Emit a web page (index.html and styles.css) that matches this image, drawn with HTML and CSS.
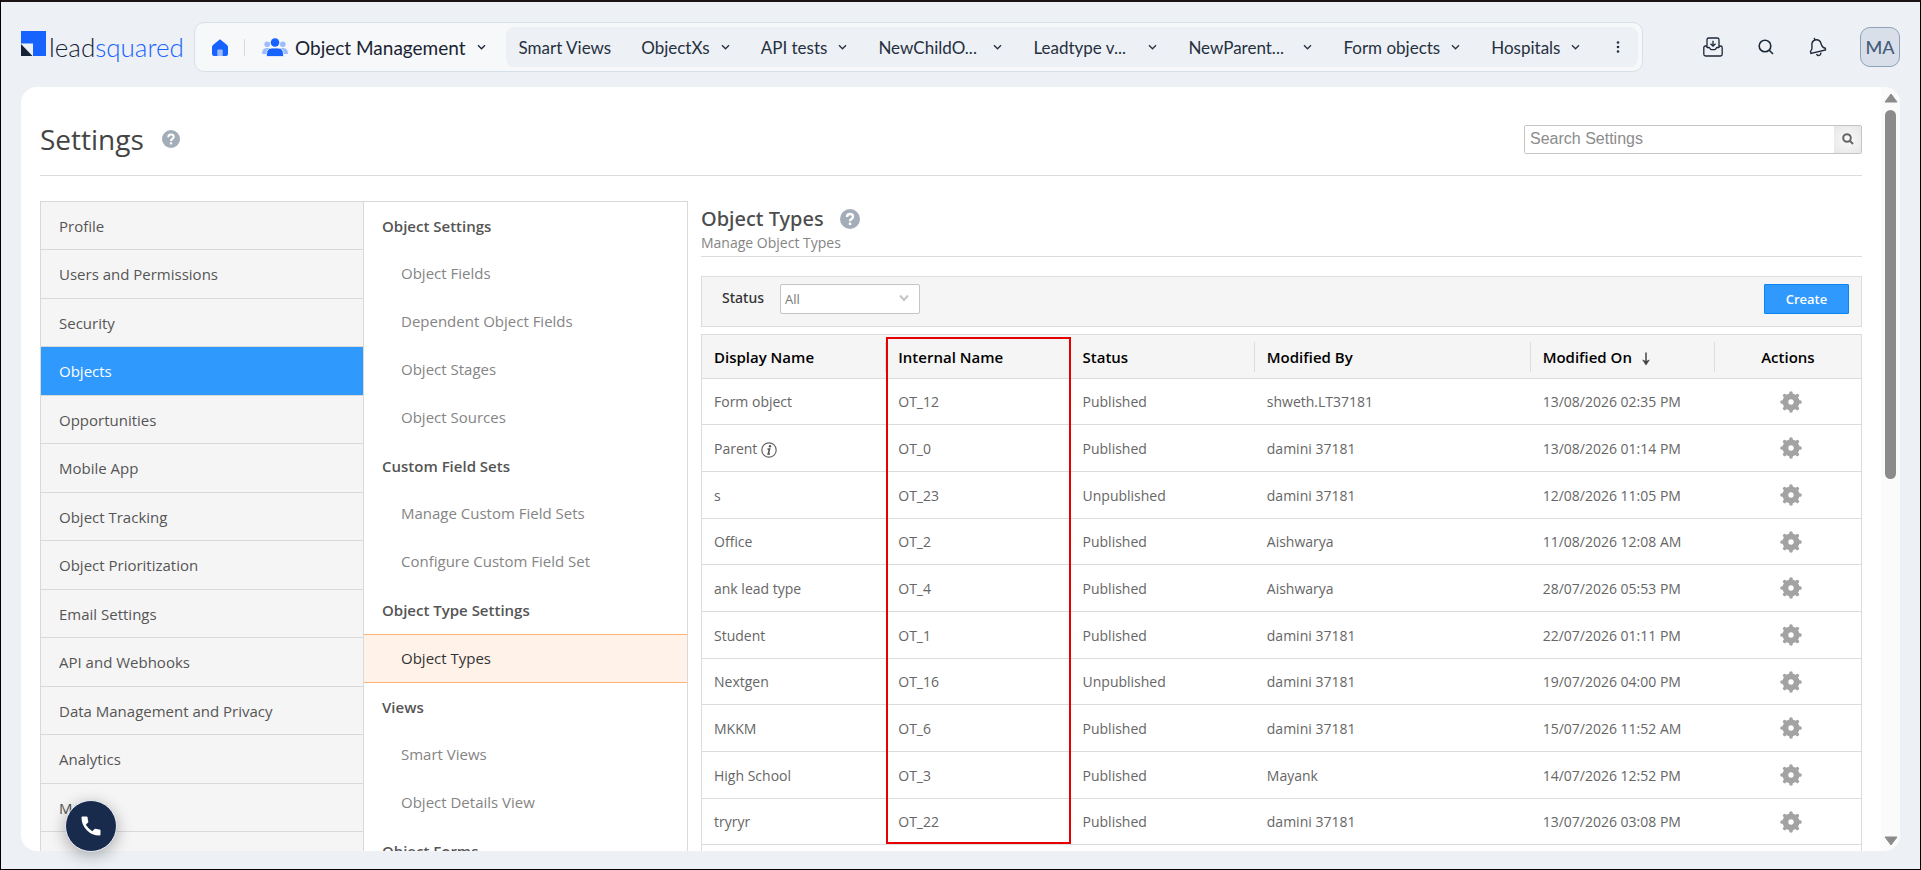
FILE: index.html
```html
<!DOCTYPE html>
<html lang="en">
<head>
    <meta charset="UTF-8">
    <meta name="viewport" content="width=device-width, initial-scale=1.0">
    <title>Settings - Object Types</title>
    <link rel="stylesheet" href="styles.css">
</head>
<body>
    <svg class="sprite" aria-hidden="true">
        <symbol id="chevron" viewBox="0 0 8 8">
            <path d="M0.5 2.2 L4 5.8 L7.5 2.2" fill="none" stroke="currentColor" stroke-width="1.3"/>
        </symbol>
        <symbol id="help" viewBox="0 0 20 20">
            <circle cx="10" cy="10" r="10" fill="#a3adb9"/>
            <path d="M7 8 Q7 5 10 5 Q13 5 13 7.6 Q13 9.2 11.4 10 Q10 10.8 10 12.2" fill="none" stroke="#fff" stroke-width="2.3"/>
            <rect x="8.8" y="13.6" width="2.4" height="2.4" fill="#fff"/>
        </symbol>
        <symbol id="gear" viewBox="0 0 22 22">
            <g fill="#a3a3a3">
                <circle cx="11" cy="11" r="8.5"/>
                <g id="teeth">
                    <rect x="9.2" y="0.3" width="3.6" height="21.4" rx="1.6"/>
                    <rect x="0.3" y="9.2" width="21.4" height="3.6" rx="1.6"/>
                </g>
                <use href="#teeth" transform="rotate(45 11 11)"/>
            </g>
            <circle cx="11" cy="11" r="2.7" fill="#fff"/>
        </symbol>
    </svg>

    <header class="header">
        <a class="logo" href="#" aria-label="leadsquared">
            <svg width="25" height="25" viewBox="0 0 25 25">
                <path d="M0 0 H25 V25 H12 V12.5 H0 Z" fill="#1663ff"/>
                <path d="M0 13 V25 H11.5 Z" fill="#152238"/>
            </svg>
            <span class="logo-text">lead<span>squared</span></span>
        </a>

        <nav class="nav">
            <a class="home" href="#" aria-label="Home">
                <svg width="16" height="17" viewBox="0 0 16 17">
                    <path d="M8 0.3 L15 6 Q16 6.8 16 8 V15 Q16 17 14 17 H2 Q0 17 0 15 V8 Q0 6.8 1 6 Z" fill="#1663ff"/>
                    <path d="M5.3 17 V11.5 Q5.3 10.5 6.3 10.5 H9.7 Q10.7 10.5 10.7 11.5 V17 Z" fill="#9dbcff"/>
                </svg>
            </a>
            <button class="module">
                <svg width="26" height="19" viewBox="0 0 26 19">
                    <g fill="#9dbcff">
                        <circle cx="5.2" cy="6.2" r="2.8"/>
                        <circle cx="20.8" cy="6.2" r="2.8"/>
                        <path d="M0 16 Q0 10 4.5 10 H8 L5 16 Z"/>
                        <path d="M26 16 Q26 10 21.5 10 H18 L21 16 Z"/>
                    </g>
                    <path d="M4.500 18.500 V16.500 Q4.500 10 10 10 H16 Q21.500 10 21.500 16.500 V18.500 Z" fill="#1663ff" stroke="#f6f8fa" stroke-width="0.8"/>
                    <circle cx="13" cy="4.500" r="4.300" fill="#1663ff"/>
                </svg>
                <span>Object Management</span>
                <svg class="chevron"><use href="#chevron"/></svg>
            </button>
            <div class="tabs">
                <button class="tab">Smart Views</button>
                <button class="tab">ObjectXs <svg class="chevron"><use href="#chevron"/></svg></button>
                <button class="tab">API tests <svg class="chevron"><use href="#chevron"/></svg></button>
                <button class="tab"><span class="clip">NewChildO...</span> <svg class="chevron"><use href="#chevron"/></svg></button>
                <button class="tab"><span class="clip">Leadtype v...</span> <svg class="chevron"><use href="#chevron"/></svg></button>
                <button class="tab"><span class="clip">NewParent...</span> <svg class="chevron"><use href="#chevron"/></svg></button>
                <button class="tab">Form objects <svg class="chevron"><use href="#chevron"/></svg></button>
                <button class="tab">Hospitals <svg class="chevron"><use href="#chevron"/></svg></button>
                <button class="more" aria-label="More">
                    <svg width="4" height="12" viewBox="0 0 4 12" fill="#26303f">
                        <circle cx="2" cy="1.5" r="1.3"/><circle cx="2" cy="6" r="1.3"/><circle cx="2" cy="10.5" r="1.3"/>
                    </svg>
                </button>
            </div>
        </nav>

        <div class="tools">
            <button class="tool" aria-label="Inbox">
                <svg width="20" height="20" viewBox="0 0 20 20" fill="none" stroke="#1d2939" stroke-width="1.3">
                    <path d="M4 11 V2.700 Q4 1 5.700 1 H14.300 Q16 1 16 2.700 V11"/>
                    <path d="M4 9 H2.500 Q0.800 9 0.800 10.700 V17.300 Q0.800 19 2.500 19 H17.500 Q19.200 19 19.200 17.300 V10.700 Q19.200 9 17.500 9 H16"/>
                    <path d="M4 10.500 H5.500 Q6.500 10.500 7 11.500 Q7.500 12.700 8.500 12.700 H11.500 Q12.500 12.700 13 11.500 Q13.500 10.500 14.500 10.500 H16"/>
                    <path d="M10 3.800 V9 M7.500 6.800 L10 9.200 L12.500 6.800"/>
                </svg>
            </button>
            <button class="tool" aria-label="Search">
                <svg width="16" height="16" viewBox="0 0 16 16" fill="none" stroke="#1d2939" stroke-width="1.6">
                    <circle cx="7" cy="7" r="5.800"/><path d="M11 11 L15 15"/>
                </svg>
            </button>
            <button class="tool" aria-label="Notifications">
                <svg width="18" height="20" viewBox="0 0 18 20" fill="none" stroke="#1d2939" stroke-width="1.4">
                    <path d="M2 16.500 L1.500 14.500 Q3.500 12.500 3 9 Q2.200 4.500 6 3 Q10.500 2 12 6.500 Q13.200 10.800 16.300 11.200 L16.500 13 Z M5.800 3 L5.300 0.800 M7.500 17 Q8.700 19.500 11 18 Q12 17.200 11.800 15.500"/>
                </svg>
            </button>
            <button class="avatar">MA</button>
        </div>
    </header>

    <main class="card">
        <div class="content">
            <div class="page-head">
                <h1>Settings</h1>
                <svg class="help small"><use href="#help"/></svg>
                <form class="search">
                    <input type="text" placeholder="Search Settings" aria-label="Search Settings">
                    <button type="button" aria-label="Search">
                        <svg width="12" height="12" viewBox="0 0 12 12" fill="none" stroke="#666" stroke-width="2">
                            <circle cx="5" cy="5" r="3.8"/><path d="M7.5 7.5 L11 11"/>
                        </svg>
                    </button>
                </form>
            </div>

            <div class="columns">
                <nav class="menu">
                    <a href="#">Profile</a>
                    <a href="#">Users and Permissions</a>
                    <a href="#">Security</a>
                    <a href="#" class="active">Objects</a>
                    <a href="#">Opportunities</a>
                    <a href="#">Mobile App</a>
                    <a href="#">Object Tracking</a>
                    <a href="#">Object Prioritization</a>
                    <a href="#">Email Settings</a>
                    <a href="#">API and Webhooks</a>
                    <a href="#">Data Management and Privacy</a>
                    <a href="#">Analytics</a>
                    <a href="#">More</a>
                    <a href="#"></a>
                </nav>

                <nav class="submenu">
                    <h3>Object Settings</h3>
                    <a href="#">Object Fields</a>
                    <a href="#">Dependent Object Fields</a>
                    <a href="#">Object Stages</a>
                    <a href="#">Object Sources</a>
                    <h3>Custom Field Sets</h3>
                    <a href="#">Manage Custom Field Sets</a>
                    <a href="#">Configure Custom Field Set</a>
                    <h3>Object Type Settings</h3>
                    <a href="#" class="active">Object Types</a>
                    <h3>Views</h3>
                    <a href="#">Smart Views</a>
                    <a href="#">Object Details View</a>
                    <h3>Object Forms</h3>
                </nav>

                <section class="panel">
                    <div class="panel-head">
                        <h2>Object Types <svg class="help"><use href="#help"/></svg></h2>
                        <p>Manage Object Types</p>
                    </div>

                    <div class="filter">
                        <label for="status">Status</label>
                        <div class="select">
                            <select id="status"><option>All</option></select>
                            <svg width="10" height="8" viewBox="0 0 10 8"><path d="M1 1.5 L5 6 L9 1.5" fill="none" stroke="#c4c4c4" stroke-width="2"/></svg>
                        </div>
                        <button class="create">Create</button>
                    </div>

                    <div class="table-wrap">
                        <table>
                            <thead>
                                <tr>
                                    <th><div>Display Name</div></th>
                                    <th><div>Internal Name</div></th>
                                    <th><div>Status</div></th>
                                    <th class="wide"><div>Modified By</div></th>
                                    <th><div>Modified On
                                        <svg width="8" height="14" viewBox="0 0 8 14"><path d="M4 0.5 V9" stroke="#444" stroke-width="1.5"/><path d="M0 7.5 L4 9 L8 7.5 L4 13.5 Z" fill="#444"/></svg>
                                    </div></th>
                                    <th class="actions"><div>Actions</div></th>
                                </tr>
                            </thead>
                            <tbody>
                                <tr><td>Form object</td><td>OT_12</td><td>Published</td><td>shweth.LT37181</td><td>13/08/2026 02:35 PM</td><td><svg class="gear"><use href="#gear"/></svg></td></tr>
                                <tr><td>Parent <svg class="info" viewBox="0 0 16 16"><circle cx="8" cy="8" r="7.2" fill="none" stroke="#666" stroke-width="1.2"/><circle cx="9" cy="4.2" r="1.2" fill="#555"/><path d="M6.5 7 H8.6 L7.2 12 H9" fill="none" stroke="#555" stroke-width="1.6"/></svg></td><td>OT_0</td><td>Published</td><td>damini 37181</td><td>13/08/2026 01:14 PM</td><td><svg class="gear"><use href="#gear"/></svg></td></tr>
                                <tr><td>s</td><td>OT_23</td><td>Unpublished</td><td>damini 37181</td><td>12/08/2026 11:05 PM</td><td><svg class="gear"><use href="#gear"/></svg></td></tr>
                                <tr><td>Office</td><td>OT_2</td><td>Published</td><td>Aishwarya</td><td>11/08/2026 12:08 AM</td><td><svg class="gear"><use href="#gear"/></svg></td></tr>
                                <tr><td>ank lead type</td><td>OT_4</td><td>Published</td><td>Aishwarya</td><td>28/07/2026 05:53 PM</td><td><svg class="gear"><use href="#gear"/></svg></td></tr>
                                <tr><td>Student</td><td>OT_1</td><td>Published</td><td>damini 37181</td><td>22/07/2026 01:11 PM</td><td><svg class="gear"><use href="#gear"/></svg></td></tr>
                                <tr><td>Nextgen</td><td>OT_16</td><td>Unpublished</td><td>damini 37181</td><td>19/07/2026 04:00 PM</td><td><svg class="gear"><use href="#gear"/></svg></td></tr>
                                <tr><td>MKKM</td><td>OT_6</td><td>Published</td><td>damini 37181</td><td>15/07/2026 11:52 AM</td><td><svg class="gear"><use href="#gear"/></svg></td></tr>
                                <tr><td>High School</td><td>OT_3</td><td>Published</td><td>Mayank</td><td>14/07/2026 12:52 PM</td><td><svg class="gear"><use href="#gear"/></svg></td></tr>
                                <tr><td>tryryr</td><td>OT_22</td><td>Published</td><td>damini 37181</td><td>13/07/2026 03:08 PM</td><td><svg class="gear"><use href="#gear"/></svg></td></tr>
                            </tbody>
                        </table>
                        <div class="highlight"></div>
                    </div>
                </section>
            </div>
        </div>

        <div class="scrollbar">
            <svg width="14" height="10" viewBox="0 0 14 10"><path d="M7 1 L13 9 H1 Z" fill="#8b8b8b" stroke="#8b8b8b" stroke-linejoin="round"/></svg>
            <div class="thumb"></div>
            <svg width="14" height="10" viewBox="0 0 14 10"><path d="M7 9 L13 1 H1 Z" fill="#8b8b8b" stroke="#8b8b8b" stroke-linejoin="round"/></svg>
        </div>
    </main>

    <button class="call" aria-label="Call">
        <svg width="22" height="22" viewBox="0 0 22 22"><path d="M2.5 1.5 H6.5 Q7.5 1.5 7.6 2.5 Q7.7 4.5 8.3 6.2 Q8.5 7 8 7.6 L5.8 9.8 Q8.2 14 12.3 16.2 L14.5 14 Q15 13.6 15.8 13.8 Q17.5 14.3 19.5 14.4 Q20.5 14.5 20.5 15.5 V19.5 Q20.5 20.5 19.5 20.5 Q12 20.5 6.8 15.2 Q1.5 10 1.5 2.5 Q1.5 1.5 2.5 1.5 Z" fill="#fff"/></svg>
    </button>
</body>
</html>
```
FILE: styles.css
```css
* {
    box-sizing: border-box;
}
body {
    margin: 0;
    height: 100vh;
    display: flex;
    flex-direction: column;
    overflow: hidden;
    background: #edf1f5;
    border: 1px solid #000;
    border-top: 2px solid #1a1414;
    font-family: "Open Sans", sans-serif;
    color: #555;
}
button {
    font: inherit;
    color: inherit;
    background: none;
    border: 0;
    padding: 0;
    cursor: pointer;
}
a {
    color: inherit;
    text-decoration: none;
}
h1, h2, h3, p {
    margin: 0;
}
svg {
    flex-shrink: 0;
}
.sprite {
    position: absolute;
    width: 0;
    height: 0;
}

/* header */
.header {
    display: flex;
    align-items: center;
    padding: 20px 20px 15px;
    font-family: Lato, sans-serif;
}
.logo {
    display: flex;
    gap: 3px;
    width: 173px;
    flex-shrink: 0;
}
.logo-text {
    font-size: 26px;
    line-height: 32px;
    font-weight: 300;
    color: #152238;
}
.logo-text span {
    color: #1663ff;
}
.nav {
    display: flex;
    align-items: center;
    height: 50px;
    padding: 0 4px 0 17px;
    background: #f6f8fa;
    border: 1px solid #d8e0e7;
    border-radius: 10px;
}
.home {
    display: flex;
    padding-right: 16px;
    border-right: 1px solid #d5dbe1;
}
.module {
    display: flex;
    align-items: center;
    gap: 7px;
    padding: 0 20px 0 17px;
    font-size: 19px;
    font-weight: 400;
    white-space: nowrap;
    color: #1a2433;
}
.chevron {
    width: 9px;
    height: 8px;
    margin-left: 4px;
}
.tabs {
    display: flex;
    align-items: center;
    height: 40px;
    padding: 0 18px 0 0;
    background: #edf1f5;
    border-radius: 8px;
    font-size: 17px;
    color: #26303f;
}
.tab {
    display: flex;
    align-items: center;
    gap: 7px;
    padding: 0 18px 0 13px;
    white-space: nowrap;
}
.tab:first-child {
    padding-right: 17px;
}
.clip {
    width: 104px;
    text-align: left;
}
.more {
    display: flex;
    padding-left: 18px;
}
.tools {
    display: flex;
    align-items: center;
    gap: 31px;
    margin-left: auto;
}
.tool {
    display: flex;
    padding: 0 2px;
}
.avatar {
    width: 40px;
    height: 40px;
    border: 1px solid #8ea0bb;
    border-radius: 10px;
    background: #d8dfe8;
    color: #475b7b;
    font-size: 18px;
    font-weight: 500;
}

/* page card */
.card {
    flex: 1;
    min-height: 0;
    display: flex;
    margin: 0 20px 18px;
    background: #fff;
    border-radius: 16px;
    overflow: hidden;
}
.content {
    flex: 1;
    padding: 28px 19px 0;
}
.page-head {
    display: flex;
    align-items: center;
    height: 61px;
    padding-bottom: 12px;
    border-bottom: 1px solid #dcdcdc;
}
.page-head h1 {
    font-size: 28px;
    line-height: 40px;
    font-weight: 400;
    color: #444;
}
.help {
    width: 20px;
    height: 20px;
    margin-left: 16px;
}
.help.small {
    width: 18px;
    height: 18px;
    margin-left: 18px;
}
.search {
    display: flex;
    width: 338px;
    height: 29px;
    margin-left: auto;
    border: 1px solid #c4c4c4;
    border-radius: 2px;
}
.search input {
    flex: 1;
    min-width: 0;
    border: 0;
    padding: 0 5px;
    font: 16px "Liberation Sans", sans-serif;
}
.search input::placeholder {
    color: #8c8c8c;
}
.search button {
    width: 27px;
    background: radial-gradient(#fafafa, #e6e6e6);
}

.columns {
    display: flex;
    padding-top: 25px;
}
.menu, .submenu {
    flex-shrink: 0;
    border-top: 1px solid #d9d9d9;
    border-left: 1px solid #d9d9d9;
    font-size: 15px;
}
.menu {
    width: 323px;
    background: #f5f5f5;
}
.menu a {
    display: flex;
    align-items: center;
    height: 48px;
    padding-left: 18px;
    border-bottom: 1px solid #d9d9d9;
}
.menu a:nth-child(even) {
    height: 49px;
}
.menu .active {
    background: #3099fe;
    color: #fff;
}
.submenu {
    width: 325px;
    border-right: 1px solid #d9d9d9;
    color: #858585;
}
.submenu h3 {
    height: 48px;
    padding-left: 18px;
    font-size: 15px;
    line-height: 48px;
    font-weight: 600;
    color: #555;
}
.submenu a {
    display: block;
    height: 48px;
    padding-left: 37px;
    line-height: 46px;
}
.submenu .active {
    height: 49px;
    background: #fff2e9;
    border-top: 1px solid #ffb272;
    border-bottom: 1px solid #ffb272;
    color: #333;
}

.panel {
    flex: 1;
    padding-left: 13px;
}
.panel-head {
    height: 56px;
    border-bottom: 1px solid #dcdcdc;
}
.panel-head h2 {
    display: flex;
    align-items: center;
    font-family: "Noto Sans", sans-serif;
    font-size: 20px;
    line-height: 36px;
    font-weight: 500;
    color: #4d4d4d;
}
.panel-head p {
    font-size: 14px;
    line-height: 12px;
    color: #858585;
}
.filter {
    display: flex;
    align-items: flex-start;
    height: 51px;
    margin-top: 19px;
    padding: 7px 12px 0 20px;
    background: #f5f5f5;
    border: 1px solid #dcdcdc;
}
.filter label {
    width: 58px;
    font-family: "Noto Sans", sans-serif;
    font-size: 14px;
    line-height: 28px;
    font-weight: 500;
    color: #333;
}
.select {
    position: relative;
}
.select select {
    appearance: none;
    width: 140px;
    height: 30px;
    padding: 0 4px;
    border: 1px solid #c4c4c4;
    border-radius: 2px;
    background: #fff;
    font: 13px "Open Sans", sans-serif;
    color: #777;
}
.select svg {
    position: absolute;
    right: 11px;
    top: 10px;
}
.create {
    width: 85px;
    height: 30px;
    margin-left: auto;
    background: #3099fe;
    border: 1px solid #0a84f5;
    border-radius: 1px;
    font-size: 13px;
    font-weight: 600;
    color: #fff;
}

.table-wrap {
    position: relative;
    margin-top: 7px;
    border: 1px solid #dcdcdc;
}
table {
    width: 100%;
    table-layout: fixed;
    border-collapse: separate;
    border-spacing: 0;
    font-size: 14px;
    color: #666;
}
th {
    width: 15.9%;
    height: 44px;
    padding: 0;
    border-bottom: 1px solid #dcdcdc;
    background: #f5f5f5;
    text-align: left;
    font-size: 15px;
    font-weight: 600;
    color: #000;
}
th div {
    padding-left: 12px;
    line-height: 30px;
    border-right: 1px solid #dcdcdc;
}
th svg {
    margin-left: 6px;
    vertical-align: -3px;
}
th.wide {
    width: 23.8%;
}
th.actions {
    width: auto;
    text-align: center;
}
th.actions div {
    padding: 0;
    border: 0;
}
td {
    height: 47px;
    padding: 0 0 0 12px;
    border-bottom: 1px solid #dcdcdc;
}
tbody tr:nth-child(3n+1) td {
    height: 46px;
}
td:last-child {
    padding-left: 6px;
    text-align: center;
}
.gear {
    width: 22px;
    height: 22px;
    vertical-align: middle;
}
.info {
    width: 16px;
    height: 16px;
    vertical-align: -4px;
}
tbody::after {
    content: "";
    display: block;
    height: 46px;
}
.highlight {
    position: absolute;
    left: 15.9%;
    top: 2px;
    width: 15.9%;
    bottom: 47px;
    border: 2px solid #e60000;
}

.scrollbar {
    width: 19px;
    padding: 6px 0 5px;
    display: flex;
    flex-direction: column;
    align-items: center;
    background: #fbfbfb;
}
.thumb {
    width: 11px;
    height: 49%;
    margin: 7px 0 auto;
    background: #8b8b8b;
    border-radius: 6px;
}

/* floating dialer */
.call {
    position: absolute;
    left: 65px;
    bottom: 18px;
    width: 52px;
    height: 52px;
    display: flex;
    align-items: center;
    justify-content: center;
    background: #182b4d;
    border: 1px solid #e8ecf2;
    border-radius: 50%;
    box-shadow: 0 4px 16px rgba(0, 0, 0, 0.3);
}
```
